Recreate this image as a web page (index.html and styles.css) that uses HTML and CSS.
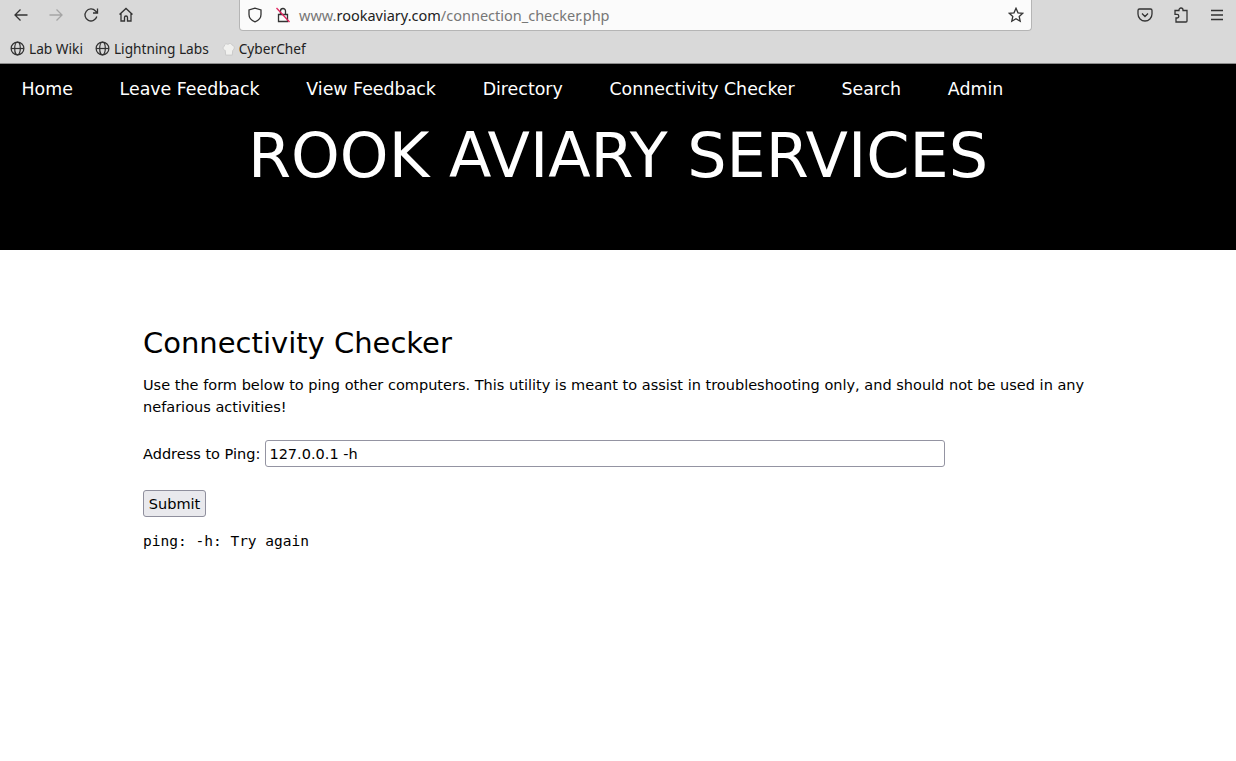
FILE: index.html
```html
<!DOCTYPE html>
<html lang="en">
<head>
<meta charset="utf-8">
<title>Connectivity Checker</title>
<link rel="stylesheet" href="styles.css">
</head>
<body>
<div class="chrome">
  <div class="toolbar">
    <div class="nav-btns">
      <svg class="ic" viewBox="0 0 16 16"><path d="M14.5 8H2M7.5 2.500 2 8l5.500 5.500"/></svg>
      <svg class="ic dim" viewBox="0 0 16 16"><path d="M1.500 8H14M8.500 2.500 14 8l-5.500 5.500"/></svg>
      <svg class="ic" viewBox="0 0 16 16"><path d="M13.800 9.500A6 6 0 1 1 12.500 4L14.500 6M14.500 1.500v4.500H10"/></svg>
      <svg class="ic" viewBox="0 0 16 16"><path d="M1.500 7.500 8 1.500l6.500 6M3 6.500V14h3.500v-3.500a1.500 1.500 0 0 1 3 0V14H13V6.500"/></svg>
    </div>
    <div class="urlbar">
      <svg class="ic shield" viewBox="0 0 16 16"><path d="M8 1.200 2 3v4.500c0 3.500 2.500 6 6 7.300 3.500-1.300 6-3.800 6-7.300V3z"/></svg>
      <svg class="ic lock" viewBox="0 0 16 16"><path d="M5.500 7V4a2.500 2.500 0 0 1 5 0v3M3.500 7.500h9v7h-9z"/><path class="slash" d="M1.500 1 14.500 15"/></svg>
      <span class="url"><span class="url-dim">www.</span>rookaviary.com<span class="url-dim">/connection_checker.php</span></span>
      <svg class="ic star" viewBox="0 0 16 16"><path d="M8 1.300 10 5.800l4.800.5-3.600 3.200 1 4.800L8 11.800l-4.200 2.500 1-4.800L1.200 6.300 6 5.800z"/></svg>
    </div>
    <div class="tools">
      <svg class="ic" viewBox="0 0 16 16"><path d="M2.500 2h11A1.500 1.500 0 0 1 15 3.500V7a7 7 0 0 1-14 0V3.500A1.500 1.500 0 0 1 2.500 2zM5 6.500l3 3 3-3"/></svg>
      <svg class="ic" viewBox="0 0 16 16"><path d="M6 3.500V3a2 2 0 0 1 4 0v.5h4v10.500a1 1 0 0 1-1 1H3v-4h1a1.800 1.800 0 0 0 0-3.600H2V3.500z"/></svg>
      <svg class="ic" viewBox="0 0 16 16"><path d="M2 3.500h12M2 8h12M2 12.500h12"/></svg>
    </div>
  </div>
  <div class="bookmarks">
    <span class="bm"><svg class="ic globe" viewBox="0 0 16 16"><circle cx="8" cy="8" r="6.800"/><ellipse cx="8" cy="8" rx="3" ry="6.800"/><path d="M1.200 8h13.600"/></svg>Lab Wiki</span>
    <span class="bm"><svg class="ic globe" viewBox="0 0 16 16"><circle cx="8" cy="8" r="6.800"/><ellipse cx="8" cy="8" rx="3" ry="6.800"/><path d="M1.200 8h13.600"/></svg>Lightning Labs</span>
    <span class="bm"><svg class="chef" viewBox="0 0 16 16"><path d="M4.500 9.500C2 9 1.500 6 3.500 5 3.500 2.500 6 2 7.500 3c1.500-1.500 4-1 4.500 1 2.500 0 3 4 .5 5.500L12 14.500H5z"/></svg>CyberChef</span>
  </div>
</div>
<header class="site-header">
  <nav class="site-nav">
    <a href="#">Home</a>
    <a href="#">Leave Feedback</a>
    <a href="#">View Feedback</a>
    <a href="#">Directory</a>
    <a href="#">Connectivity Checker</a>
    <a href="#">Search</a>
    <a href="#">Admin</a>
  </nav>
  <h1>ROOK AVIARY SERVICES</h1>
</header>
<main class="content">
  <h2>Connectivity Checker</h2>
  <p class="intro">Use the form below to ping other computers. This utility is meant to assist in troubleshooting only, and should not be used in any nefarious activities!</p>
  <form class="ping-form">
    <div class="field">
      <label for="addr">Address to Ping:</label>
      <input id="addr" type="text" value="127.0.0.1 -h">
    </div>
    <button type="button">Submit</button>
  </form>
  <pre>ping: -h: Try again</pre>
</main>
</body>
</html>
```
FILE: styles.css
```css
* { box-sizing: border-box; }
html, body { margin: 0; padding: 0; background: #fff; height: 100%; overflow: hidden; }
body { font-family: "DejaVu Sans", sans-serif; color: #000; }

.chrome { height: 64px; background: #d9d9d9; border-bottom: 1px solid #8c8c8c; font-family: "Noto Sans", sans-serif; color: #222; }
.toolbar { height: 33px; display: flex; align-items: flex-start; }
.ic { width: 16px; height: 16px; fill: none; stroke: #333; stroke-width: 1.3; flex: none; }
.dim { stroke: #a5a5a5; }
.nav-btns { display: flex; gap: 19px; padding: 7px 0 0 13px; width: 239px; }
.urlbar { width: 793px; height: 31px; background: #fbfbfb; border: 1px solid #b5b5b5; border-top: 0; border-radius: 0 0 4px 4px; display: flex; align-items: center; padding: 0 7px; }
.lock { margin-left: 12px; }
.slash { stroke: #e0245e; }
.url { margin-left: 8px; flex: 1; font-size: 14.5px; color: #222; white-space: nowrap; }
.url-dim { color: #777; }
.tools { display: flex; gap: 20px; padding: 7px 0 0 105px; }
.bookmarks { display: flex; height: 30px; padding: 1px 0 0 10px; gap: 12px; font-size: 13.7px; align-items: center; }
.bm { display: flex; align-items: center; gap: 4px; }
.bm + .bm + .bm { gap: 3px; }
.globe { width: 15px; height: 15px; }
.chef { width: 15px; height: 18px; fill: #f1f1ef; stroke: #c9c9c9; }

.site-header { height: 186px; background: #000; color: #fff; }
.site-nav { display: flex; height: 49px; padding: 0 0 0 21.500px; gap: 46.700px; align-items: center; font-size: 17.400px; }
.site-nav a { color: #fff; text-decoration: none; }
h1 { margin: 1px 0 0; text-align: center; font-weight: 400; font-size: 62px; line-height: 84px; }

.content { padding: 74px 143px 0; }
h2 { margin: 0; font-weight: 400; font-size: 29px; line-height: 38px; }
.intro { margin: 12px 0 0; font-size: 14.530px; line-height: 22px; }
.ping-form { margin-top: 22px; font-size: 14.530px; }
.field { display: flex; align-items: center; gap: 5px; }
label { line-height: 26px; }
input { width: 680px; height: 27px; font: 14.530px "DejaVu Sans", sans-serif; padding: 1px 3px; border: 1px solid #9494a2; border-radius: 3px; color: #000; background: #fff; }
button { display: block; margin-top: 23px; height: 27px; width: 63px; padding: 0; font: 14.530px "DejaVu Sans", sans-serif; color: #000; background: #e9e9ed; border: 1px solid #8f8f9d; border-radius: 3px; }
pre { margin: 14px 0 0; font: 14.530px/20px "DejaVu Sans Mono", monospace; }
```
